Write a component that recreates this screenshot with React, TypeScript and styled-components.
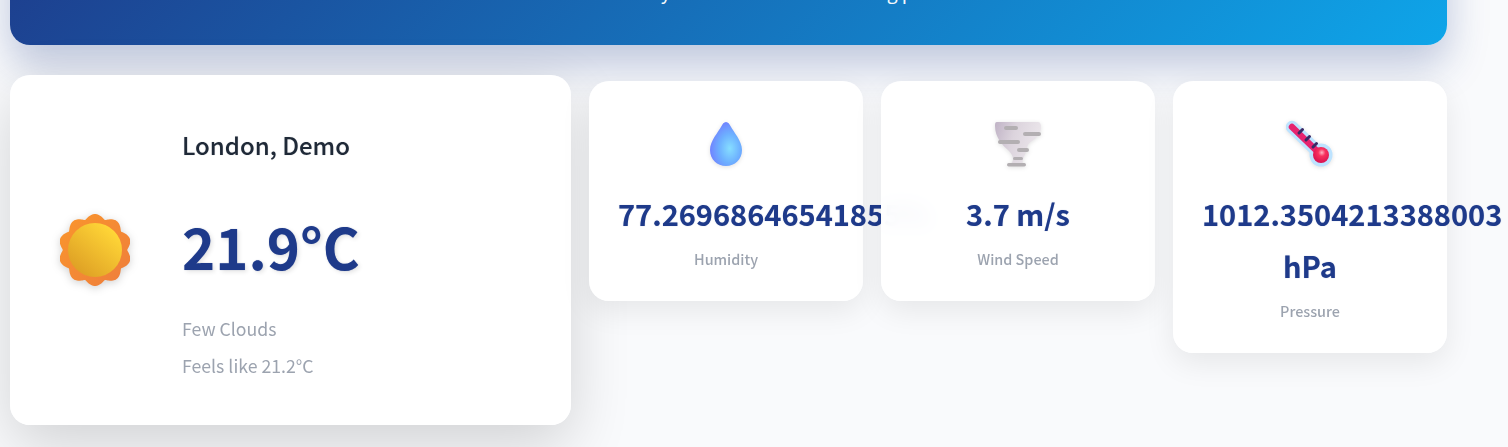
import React from "react";
import styled, { createGlobalStyle } from "styled-components";

const GlobalStyle = createGlobalStyle`
  html, body {
    margin: 0;
    padding: 0;
    height: 447px;
    overflow: hidden;
    background: #f9fafc;
  }
  body {
    font-family: "Noto Sans CJK SC", "Noto Sans", sans-serif;
  }
`;

const Page = styled.div`
  display: flex;
  flex-direction: column;
  gap: 30px;
  padding: 0 61px 0 10px;
  margin-top: -95px;
`;

const Hero = styled.header`
  height: 140px;
  flex: none;
  box-sizing: border-box;
  padding-top: 74px;
  border-radius: 20px;
  background: linear-gradient(135deg, #1e3a8a 0%, #0ea5e9 100%);
  box-shadow: 0 20px 40px rgba(30, 58, 138, 0.27);
  color: #fff;
  text-align: center;
  font-size: 19.2px;
  line-height: 24px;
`;

const Tagline = styled.p`
  margin: 0;
  padding-left: 7px;
  opacity: 0.95;
`;

const Row = styled.section`
  display: grid;
  grid-template-columns: 561px repeat(3, minmax(0, 1fr));
  gap: 18px;
  align-items: start;
`;

const WeatherCard = styled.article`
  height: 350px;
  box-sizing: border-box;
  background: rgba(255, 255, 255, 0.98);
  backdrop-filter: blur(10px);
  border-radius: 20px;
  box-shadow: 0 20px 60px rgba(0, 0, 0, 0.16);
  display: flex;
  align-items: center;
  padding: 0 40px 0 50px;
  gap: 52px;
`;

const SunWrap = styled.div`
  width: 70px;
  height: 72px;
  flex: none;
  filter: drop-shadow(0 2px 4px rgba(0, 0, 0, 0.18));
  svg { display: block; }
`;

const WeatherText = styled.div`
  display: flex;
  flex-direction: column;
  padding-top: 10px;
`;

const City = styled.h2`
  margin: 0 0 44px;
  font-size: 24px;
  line-height: 36px;
  font-weight: 500;
  color: #1f2937;
  text-shadow: 0 0 1px rgba(31, 41, 55, 0.3);
`;

const Temp = styled.div`
  font-size: 56.3px;
  line-height: 78px;
  font-weight: 700;
  color: #1e3a8a;
  text-shadow: 0 0 1px rgba(30, 58, 138, 0.4), 2px 2px 4px rgba(0, 0, 0, 0.1);
  margin-bottom: 25px;
`;

const Muted = styled.div`
  font-size: 17.7px;
  line-height: 37px;
  color: #9ca3af;
`;

const StatCard = styled.article`
  background: rgba(255, 255, 255, 0.95);
  backdrop-filter: blur(10px);
  border-radius: 20px;
  margin-top: 6px;
  box-sizing: border-box;
  padding: 33px 29px 31px;
  display: flex;
  flex-direction: column;
  align-items: center;
  text-align: center;
  box-shadow: 0 10px 30px rgba(0, 0, 0, 0.08);
`;

const StatIcon = styled.div`
  height: 60px;
  width: 60px;
  display: flex;
  align-items: center;
  justify-content: center;
  margin-bottom: 13px;
  svg { display: block; filter: drop-shadow(0 1px 2px rgba(0, 0, 0, 0.12)); }
`;

const StatValue = styled.div`
  font-size: 29px;
  line-height: 52px;
  font-weight: 700;
  color: #1e3a8a;
  text-shadow: 0 0 1px rgba(30, 58, 138, 0.4);
  width: 100%;
`;

const StatLabel = styled.div`
  font-size: 14.4px;
  line-height: 22px;
  font-weight: 500;
  color: #9ca3af;
  margin-top: 9px;
`;

// ten soft petals round the sun's core
const petalPath = Array.from({ length: 240 }, (_, i) => {
  const a = (i / 240) * Math.PI * 2;
  const bump = Math.pow(0.5 + 0.5 * Math.cos(a * 10), 0.6);
  const r = 31.5 + 4.5 * bump;
  const x = 35 + r * Math.sin(a) * 1.02;
  const y = 36 - r * Math.cos(a);
  return `${i === 0 ? "M" : "L"}${x.toFixed(2)} ${y.toFixed(2)}`;
}).join(" ") + "Z";

const SunIcon = () => (
  <svg width="70" height="72" viewBox="0 0 70 72">
    <defs>
      <linearGradient id="petal" x1="0" y1="0" x2="1" y2="1">
        <stop offset="0" stopColor="#fa962c" />
        <stop offset="1" stopColor="#ee7d3c" />
      </linearGradient>
      <linearGradient id="core" x1="0.85" y1="0.15" x2="0.2" y2="0.9">
        <stop offset="0" stopColor="#ffd637" />
        <stop offset="1" stopColor="#dfa125" />
      </linearGradient>
    </defs>
    <path fill="url(#petal)" d={petalPath} />
    <circle cx="35" cy="36" r="27" fill="url(#core)" />
  </svg>
);

const DropIcon = () => (
  <svg width="34" height="46" viewBox="0 0 34 46">
    <defs>
      <radialGradient id="drop" cx="0.62" cy="0.6" r="0.6">
        <stop offset="0" stopColor="#86deff" />
        <stop offset="0.55" stopColor="#6db0ff" />
        <stop offset="1" stopColor="#7086ff" />
      </radialGradient>
    </defs>
    <path
      fill="url(#drop)"
      d="M17 1c2.2 0 3.500 2.200 4.600 4.300C24.600 11 33 20 33 29c0 9.600-7.200 16-16 16S1 38.600 1 29C1 20 9.400 11 12.400 5.300 13.500 3.200 14.800 1 17 1z"
    />
  </svg>
);

const TornadoIcon = () => (
  <svg width="48" height="46" viewBox="0 0 48 46">
    <defs>
      <linearGradient id="funnel" x1="0" y1="0" x2="1" y2="0.3">
        <stop offset="0" stopColor="#c0b3c6" />
        <stop offset="0.45" stopColor="#dcd4dd" />
        <stop offset="1" stopColor="#ebe6eb" />
      </linearGradient>
    </defs>
    <path
      fill="url(#funnel)"
      d="M3 1h41c2 0 3 2 3 5 0 6-4 11-9 14-3 2-5 4-5 8-1 4-3 7-4 10-1 3 0 5 1 7H15c1-2 4-3 4-7 0-3-2-6-5-9C8 24 1 16 1 5c0-2 0-4 2-4z"
    />
    <g fill="#b3afb2">
      <rect x="10" y="5" width="14" height="4" rx="2" />
      <rect x="29" y="11" width="18" height="4" rx="2" />
      <rect x="4" y="19" width="22" height="4" rx="2" />
      <rect x="23" y="27" width="12" height="4" rx="2" />
      <rect x="19" y="36" width="10" height="3" rx="1.500" />
      <rect x="13" y="42" width="19" height="3.500" rx="1.700" />
    </g>
  </svg>
);

const ThermometerIcon = () => (
  <svg width="48" height="50" viewBox="0 0 48 50">
    <defs>
      <radialGradient id="bulb" cx="0.55" cy="0.35" r="0.65">
        <stop offset="0" stopColor="#ffb3c4" />
        <stop offset="0.35" stopColor="#f8315f" />
        <stop offset="1" stopColor="#d8104f" />
      </radialGradient>
    </defs>
    <path d="M6 8 L34 35" stroke="#bde3ff" strokeWidth="12.500" strokeLinecap="round" />
    <circle cx="35" cy="36" r="11.500" fill="#bde3ff" />
    <path d="M6 8 L34 35" stroke="#e6246f" strokeWidth="6.500" strokeLinecap="round" />
    <circle cx="35" cy="36" r="8" fill="url(#bulb)" />
    <g stroke="#3a2a66" strokeWidth="3" strokeLinecap="round">
      <path d="M13 14 L16.500 10.500" />
      <path d="M20 21 L23.500 17.500" />
      <path d="M27 28 L30.500 24.500" />
    </g>
  </svg>
);

const App: React.FC = () => (
  <>
    <GlobalStyle />
    <Page>
      <Hero>
        <Tagline>Real-time climate analysis with machine learning powered AI</Tagline>
      </Hero>
      <Row>
        <WeatherCard>
          <SunWrap>
            <SunIcon />
          </SunWrap>
          <WeatherText>
            <City>London, Demo</City>
            <Temp>21.9°C</Temp>
            <Muted>Few Clouds</Muted>
            <Muted>Feels like 21.2°C</Muted>
          </WeatherText>
        </WeatherCard>
        <StatCard>
          <StatIcon>
            <DropIcon />
          </StatIcon>
          <StatValue>77.26968646541855%</StatValue>
          <StatLabel>Humidity</StatLabel>
        </StatCard>
        <StatCard>
          <StatIcon>
            <TornadoIcon />
          </StatIcon>
          <StatValue>3.7 m/s</StatValue>
          <StatLabel>Wind Speed</StatLabel>
        </StatCard>
        <StatCard>
          <StatIcon>
            <ThermometerIcon />
          </StatIcon>
          <StatValue>1012.3504213388003 hPa</StatValue>
          <StatLabel>Pressure</StatLabel>
        </StatCard>
      </Row>
    </Page>
  </>
);

export default App;
